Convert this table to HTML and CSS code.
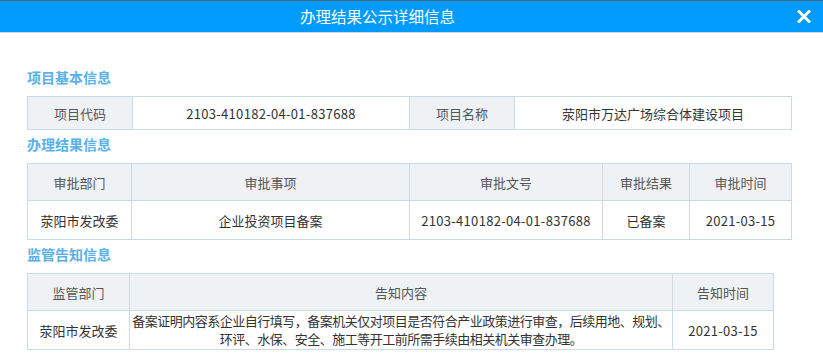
FILE: index.html
```html
<!DOCTYPE html>
<html lang="zh-CN">
<head>
    <meta charset="UTF-8">
    <meta name="viewport" content="width=device-width, initial-scale=1.0">
    <title>办理结果公示详细信息</title>
    <link rel="stylesheet" href="styles.css">
</head>
<body>

    <div class="dialog">

        <!-- Dialog title bar -->
        <div class="dialog-header">
            <span class="dialog-title">办理结果公示详细信息</span>
            <svg class="dialog-close" width="14" height="13" viewBox="0 0 14 13">
                <path d="M2 1.5 L12 11.5 M12 1.5 L2 11.5" stroke="#fff" stroke-width="3" stroke-linecap="square" fill="none"/>
            </svg>
        </div>

        <div class="dialog-body">

            <!-- Project basic info -->
            <h3 class="section-title">项目基本信息</h3>
            <table class="info-table">
                <colgroup>
                    <col style="width: 105px">
                    <col style="width: 277px">
                    <col style="width: 105px">
                    <col style="width: 277px">
                </colgroup>
                <tr class="row-basic">
                    <th>项目代码</th>
                    <td class="num">2103-410182-04-01-837688</td>
                    <th>项目名称</th>
                    <td>荥阳市万达广场综合体建设项目</td>
                </tr>
            </table>

            <!-- Handling result -->
            <h3 class="section-title">办理结果信息</h3>
            <table class="info-table">
                <colgroup>
                    <col style="width: 104px">
                    <col style="width: 278px">
                    <col style="width: 193px">
                    <col style="width: 87px">
                    <col style="width: 102px">
                </colgroup>
                <tr class="row-head">
                    <th>审批部门</th>
                    <th>审批事项</th>
                    <th>审批文号</th>
                    <th>审批结果</th>
                    <th>审批时间</th>
                </tr>
                <tr class="row-data">
                    <td>荥阳市发改委</td>
                    <td>企业投资项目备案</td>
                    <td class="num">2103-410182-04-01-837688</td>
                    <td>已备案</td>
                    <td class="num">2021-03-15</td>
                </tr>
            </table>

            <!-- Supervision notice -->
            <h3 class="section-title">监管告知信息</h3>
            <table class="info-table notice-table">
                <colgroup>
                    <col style="width: 102px">
                    <col style="width: 543px">
                    <col style="width: 101px">
                </colgroup>
                <tr class="row-head">
                    <th>监管部门</th>
                    <th>告知内容</th>
                    <th>告知时间</th>
                </tr>
                <tr class="row-data">
                    <td>荥阳市发改委</td>
                    <td class="notice-text">备案证明内容系企业自行填写，备案机关仅对项目是否符合产业政策进行审查，后续用地、规划、环评、水保、安全、施工等开工前所需手续由相关机关审查办理。</td>
                    <td class="num">2021-03-15</td>
                </tr>
            </table>

        </div>
    </div>

</body>
</html>
```

FILE: styles.css
```css
body {
    margin: 0;
    padding: 0;
    font-family: "Noto Sans CJK SC", "Microsoft YaHei", sans-serif;
    background-color: #fff;
    color: #333;
}

.dialog {
    width: 823px;
    height: 356px;
    overflow: hidden;
    border-top: 1px solid #4b6886;
}

.dialog-header {
    height: 31px;
    padding-right: 68px;
    background-color: #009bfe;
    border-bottom: 1px solid #d6d6d6;
    position: relative;
    display: flex;
    align-items: center;
    justify-content: center;
}

.dialog-title {
    color: #fff;
    font-size: 15.5px;
    line-height: 31px;
}

.dialog-close {
    position: absolute;
    right: 12px;
    top: 9px;
}

.dialog-body {
    padding: 34px 27px 0;
}

.section-title {
    margin: 0 0 9px;
    font-size: 14px;
    font-weight: bold;
    line-height: 20px;
    color: #5ab0e9;
}

.info-table {
    border-collapse: collapse;
    table-layout: fixed;
    width: 764px;
    margin-bottom: 4px;
    font-size: 13px;
}

.notice-table {
    width: 746px;
}

.info-table th,
.info-table td {
    border: 1px solid #c9dbe8;
    text-align: center;
    padding: 0 4px;
    font-weight: normal;
}

.info-table th {
    background-color: #eef2f5;
    color: #555;
}

.info-table td {
    color: #333;
}

.info-table .num {
    letter-spacing: 0.3px;
}

.row-basic th,
.row-basic td {
    height: 32px;
}

.row-head th {
    height: 36px;
}

.row-data td {
    height: 38px;
}

.notice-text {
    padding: 0 !important;
    line-height: 18px;
    letter-spacing: -0.5px;
}
```
